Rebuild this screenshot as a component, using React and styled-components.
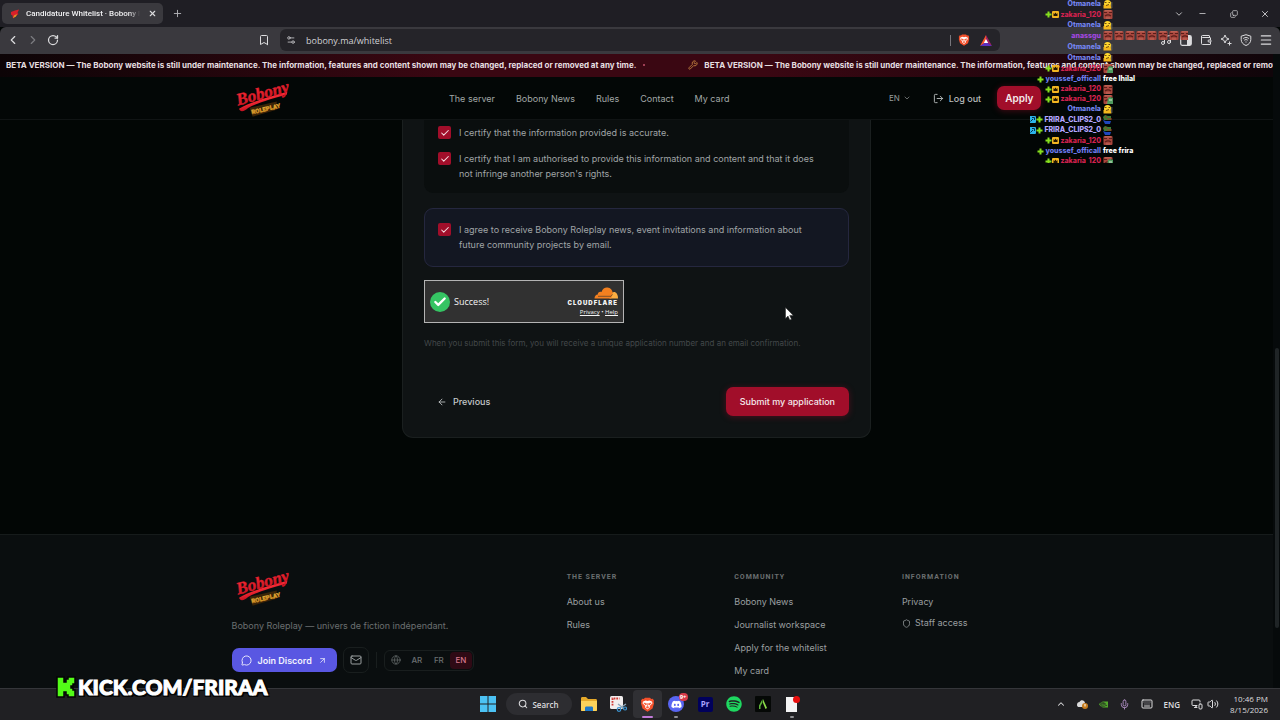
import React from "react"
import styled, {createGlobalStyle} from "styled-components"
import {
  ArrowLeft,
  ArrowUpRight,
  Bookmark,
  Check,
  ChevronDown,
  ChevronLeft,
  ChevronRight,
  ChevronUp,
  Copy,
  Globe,
  Keyboard,
  LogOut,
  Mail,
  Menu,
  MessageCircle,
  Mic,
  Minus,
  MonitorSmartphone,
  Music,
  Plus,
  RotateCw,
  Search,
  Settings2,
  Shield,
  Volume2,
  Wallet,
  Wrench,
  X,
} from "lucide-react"
import {FaDiscord, FaSpotify} from "react-icons/fa"
import {SiNvidia} from "react-icons/si"

const betaText =
  "BETA VERSION — The Bobony website is still under maintenance. The information, features and content shown may be changed, replaced or removed at any time."

const navLinks = ["The server", "Bobony News", "Rules", "Contact", "My card"]

const footerColumns = [
  {title: "The server", links: ["About us", "Rules"]},
  {
    title: "Community",
    links: ["Bobony News", "Journalist workspace", "Apply for the whitelist", "My card"],
  },
  {title: "Information", links: ["Privacy"], staff: true},
]

const chat = [
  {name: "Otmanela", color: "#7484ee", emotes: ["duck"]},
  {name: "zakaria_120", color: "#d3224f", badges: ["plus", "crown"], emotes: ["brick"], tall: true},
  {name: "Otmanela", color: "#7484ee", emotes: ["duck"]},
  {name: "anassgu", color: "#a347e0", emotes: Array(8).fill("brick"), tall: true},
  {name: "Otmanela", color: "#7484ee", emotes: ["duck"], tall: true},
  {name: "Otmanela", color: "#7484ee", emotes: ["duck"], tall: true},
  {name: "zakaria_120", color: "#d3224f", badges: ["plus", "crown"], emotes: ["mix"], tall: true},
  {name: "youssef_officall", color: "#6f7df0", badges: ["plus"], text: "free lhilal"},
  {name: "zakaria_120", color: "#d3224f", badges: ["plus", "crown"], emotes: ["brick"]},
  {name: "zakaria_120", color: "#d3224f", badges: ["plus", "crown"], emotes: ["mix"]},
  {name: "Otmanela", color: "#7484ee", emotes: ["duck"]},
  {name: "FRIRA_CLIPS2_0", color: "#b4a6ff", badges: ["mod", "plus"], emotes: ["frog"], tall: true},
  {name: "FRIRA_CLIPS2_0", color: "#b4a6ff", badges: ["mod", "plus"], emotes: ["frog"]},
  {name: "zakaria_120", color: "#d3224f", badges: ["plus", "crown"], emotes: ["brick"], tall: true},
  {name: "youssef_officall", color: "#6f7df0", badges: ["plus"], text: "free frira"},
  {name: "zakaria_120", color: "#d3224f", badges: ["plus", "crown"], emotes: ["mix"]},
]

const Logo = () => (
  <LogoArt width="58" height="36" viewBox="0 0 58 36" aria-label="Bobony Roleplay">
    <defs>
      <linearGradient id="logoRed" x1="0" y1="0" x2="0" y2="1">
        <stop offset="0" stopColor="#ff3038" />
        <stop offset="1" stopColor="#c01020" />
      </linearGradient>
      <linearGradient id="logoGold" x1="0" y1="0" x2="0" y2="1">
        <stop offset="0" stopColor="#f8c648" />
        <stop offset="1" stopColor="#b87818" />
      </linearGradient>
    </defs>
    <g transform="rotate(-15 30 18)">
      <path d="M5 22.500 C18 18.500 40 19 56 18.500 L55 21 C40 21 24 21.500 14 24 C10 26.500 5 26.500 5 22.500Z" fill="url(#logoRed)" />
      <text x="5" y="19" fontFamily="Liberation Serif, serif" fontStyle="italic" fontWeight="700" fontSize="17" fill="url(#logoRed)" stroke="#d81828" strokeWidth="0.500">Bobony</text>
    </g>
    <g transform="rotate(-13 34 28)">
      <path d="M18 24 L46 24 L44 32 L19 33.500Z" fill="#3a2408" />
      <text x="19" y="31" fontFamily="Roboto, sans-serif" fontWeight="900" fontSize="6" fill="url(#logoGold)" stroke="#e0a02c" strokeWidth="0.300">ROLEPLAY</text>
    </g>
  </LogoArt>
)

const BraveIcon = ({size}) => (
  <svg width={size} height={size} viewBox="0 0 24 24">
    <path d="M8 1h8l2 2 2.500-0.300L22.500 6l-0.700 2 0.700 2-2.500 8.500L12 23.500 4 18.500 1.500 10l0.700-2-0.700-2 2-3.300L6 3z" fill="#f4502b" />
    <path d="M5 7l4-1.500 3 0.800 3-0.800L19 7l1 3-4.500 4.500 0.500 2-4 3.500-4-3.500 0.500-2L4 10z" fill="#fff" />
    <path d="M6 9.500l4.500 1.200-1 2.300zM18 9.500l-4.500 1.200 1 2.300zM12 10v5M9.800 16.200l2.200-1.200 2.200 1.200-2.200 1.500z" fill="#f4502b" stroke="#f4502b" />
  </svg>
)

const Badge = ({kind}) => {
  if (kind === "plus")
    return (
      <svg width="7" height="7" viewBox="0 0 7 7">
        <path d="M2.500 0.500h2v2h2v2h-2v2h-2v-2h-2v-2h2z" fill="#86e01e" />
      </svg>
    )
  if (kind === "crown")
    return (
      <svg width="7" height="7" viewBox="0 0 7 7">
        <rect width="7" height="7" rx="1" fill="#f2b521" />
        <path d="M1.500 2l1 1 1-1.500 1 1.500 1-1v3h-4z" fill="#241703" />
      </svg>
    )
  return (
    <svg width="7" height="7" viewBox="0 0 7 7">
      <rect width="7" height="7" rx="1" fill="#2db4ea" />
      <path d="M1.500 5.500L4 3M3 1.500h2.500V4" stroke="#08324a" fill="none" />
    </svg>
  )
}

const Emote = ({kind}) => {
  if (kind === "duck")
    return (
      <svg width="10" height="9" viewBox="0 0 10 9">
        <circle cx="4.500" cy="3.500" r="3.500" fill="#ffd62c" />
        <path d="M0.500 5h7l1 3.500h-8z" fill="#f4b81c" />
        <path d="M1.500 2.500h2M5.500 2.500h1.500M3 5.500l3-1" stroke="#4b2b08" strokeWidth="0.800" />
        <path d="M8.800 2v6" stroke="#6b685c" />
      </svg>
    )
  if (kind === "frog")
    return (
      <svg width="10" height="9" viewBox="0 0 10 9">
        <path d="M0 2l2-2 3 1 3 0v4H1z" fill="#3d7c34" />
        <path d="M0 5l3 1h5l-1 3H2z" fill="#1e46bd" />
        <path d="M4 4h5M2 2h2" stroke="#a63320" />
      </svg>
    )
  return (
    <svg width="10" height="9" viewBox="0 0 10 9">
      <rect x="0.500" width="9" height="9" rx="1" fill="#a8463d" />
      <path d="M1 2.500h3M6 2.500h3M2 6c2-1.500 4-1.500 6 0" stroke="#5b1d19" strokeWidth="1.200" fill="none" />
      <path d="M2 0.800h6M3 8h4" stroke="#d07c6c" strokeWidth="0.700" />
      {kind === "mix" && <path d="M5 3l2-1 3 1v6H4z" fill="#4f9a5d" />}
      {kind === "mix" && <path d="M6 5h3" stroke="#d7e6d0" />}
    </svg>
  )
}

const Consent = ({id, children}) => (
  <ConsentRow htmlFor={id}>
    <CheckBox>
      <CheckInput type="checkbox" id={id} defaultChecked />
      <Check size={10} strokeWidth={2.5} />
    </CheckBox>
    <span>{children}</span>
  </ConsentRow>
)

const BrowserTop = () => (
  <>
    <TabStrip>
      <Tab>
        <svg width="10" height="10" viewBox="0 0 10 10">
          <path d="M1 3l4-1.500L9 0.500 7.500 4l1 1L3 9.500 2.500 6.500 1 5.500z" fill="#d8202a" />
          <path d="M3 9l1-2.500 3-1.500-1 2.500z" fill="#d69a26" />
        </svg>
        <TabTitle>Candidature Whitelist · Bobony R</TabTitle>
        <IconButton aria-label="Close tab" $size={12}>
          <X size={9} strokeWidth={3} />
        </IconButton>
      </Tab>
      <IconButton aria-label="New tab" $size={18} $color="#b4b4b8">
        <Plus size={11} />
      </IconButton>
      <WindowControls>
        <IconButton aria-label="Search tabs" $size={16}>
          <ChevronDown size={10} />
        </IconButton>
        <IconButton aria-label="Minimise" $size={31}>
          <Minus size={9} />
        </IconButton>
        <IconButton aria-label="Restore" $size={31}>
          <RestoreIcon size={8} />
        </IconButton>
        <IconButton aria-label="Close" $size={31}>
          <X size={10} />
        </IconButton>
      </WindowControls>
    </TabStrip>
    <Toolbar>
      <ToolGroup>
        <IconButton aria-label="Back" $size={20}>
          <ChevronLeft size={14} />
        </IconButton>
        <IconButton aria-label="Forward" $size={20} $color="#7c7c80">
          <ChevronRight size={14} />
        </IconButton>
        <IconButton aria-label="Reload" $size={20}>
          <RotateCw size={12} strokeWidth={2.5} />
        </IconButton>
        <BookmarkButton aria-label="Bookmark" $size={20}>
          <Bookmark size={12} />
        </BookmarkButton>
      </ToolGroup>
      <AddressBar>
        <Settings2 size={10} />
        <AddressInput aria-label="Address" defaultValue="bobony.ma/whitelist" />
        <ShieldsGroup>
          <AddressDivider />
          <BraveIcon size={12} />
        </ShieldsGroup>
        <svg width="12" height="11" viewBox="0 0 12 11">
          <path d="M6 0L0 11l6-3.500z" fill="#f4532d" />
          <path d="M6 0l6 11-6-3.500z" fill="#9e1f63" />
          <path d="M0 11h12L6 7z" fill="#5b2fc0" />
          <path d="M6 4L3.800 8h4.400z" fill="#fff" />
        </svg>
      </AddressBar>
      <ToolGroup $end>
        <IconButton aria-label="Playlist" $size={20}>
          <Music size={12} />
        </IconButton>
        <IconButton aria-label="Sidebar" $size={20}>
          <svg width="12" height="11" viewBox="0 0 12 11">
            <rect x="0.700" y="0.700" width="10.600" height="9.600" rx="1.500" stroke="currentColor" strokeWidth="1.200" fill="none" />
            <rect x="7" y="1" width="4" height="9" fill="currentColor" />
          </svg>
        </IconButton>
        <IconButton aria-label="Wallet" $size={20}>
          <Wallet size={12} />
        </IconButton>
        <IconButton aria-label="Leo" $size={20}>
          <svg width="12" height="12" viewBox="0 0 12 12" fill="none" stroke="currentColor">
            <path d="M5 1l1.200 2.800L9 5 6.200 6.200 5 9 3.800 6.200 1 5l2.800-1.200z" strokeLinejoin="round" />
            <path d="M9.500 7.500v4M7.500 9.500h4" />
          </svg>
        </IconButton>
        <IconButton aria-label="VPN" $size={20}>
          <svg width="12" height="12" viewBox="0 0 12 12" fill="none" stroke="currentColor">
            <path d="M6 0.700l4.800 1.500v3.300c0 3-2 5-4.800 6-2.800-1-4.800-3-4.800-6V2.200z" />
            <path d="M3.200 4.500c1.600-1.300 4-1.300 5.600 0M4.300 6.200c1-0.800 2.400-0.800 3.400 0M5.500 8h1" />
          </svg>
        </IconButton>
        <IconButton aria-label="Menu" $size={20}>
          <Menu size={14} />
        </IconButton>
      </ToolGroup>
    </Toolbar>
  </>
)

const Site = () => (
  <Viewport>
    <Page>
      <BetaBar>
        <BetaItem>{betaText}</BetaItem>
        <BetaDot />
        <Wrench size={10} color="#c98742" />
        <BetaItem>{betaText}</BetaItem>
      </BetaBar>
      <Header>
        <HeaderInner>
          <Logo />
          <Nav>
            {navLinks.map(link => (
              <NavLink href="#" key={link}>
                {link}
              </NavLink>
            ))}
          </Nav>
          <Account>
            <LangButton>
              EN <ChevronDown size={8} />
            </LangButton>
            <LogoutButton>
              <LogOut size={11} /> Log out
            </LogoutButton>
            <PrimaryButton $small>Apply</PrimaryButton>
          </Account>
        </HeaderInner>
      </Header>
      <Main>
        <Card>
          <CertifyBox>
            <Consent id="accurate">I certify that the information provided is accurate.</Consent>
            <Consent id="authorised">
              I certify that I am authorised to provide this information and content and that it does not infringe
              another person's rights.
            </Consent>
          </CertifyBox>
          <NewsBox>
            <Consent id="news">
              I agree to receive Bobony Roleplay news, event invitations and information about future community
              projects by email.
            </Consent>
          </NewsBox>
          <Turnstile>
            <SuccessMark>
              <Check size={14} strokeWidth={4} />
            </SuccessMark>
            <SuccessText>Success!</SuccessText>
            <CloudBrand>
              <svg width="24" height="12" viewBox="0 0 24 12">
                <path d="M15.500 11.500c0.300-3.500 2-6.500 4.500-6.500 2.300 0 4 2.500 4 6.500z" fill="#fbad41" />
                <path d="M0.500 11.500C0.500 9 1.800 7.500 3.800 7.400 3.500 5.500 6 4 7.500 5 8.500 1.500 11 0.300 13.500 0.500c3 0.300 5 2.500 5.200 5.500l-1.500 5.500z" fill="#f38020" />
                <path d="M4 9.300h13l1.500-2" stroke="#313131" strokeWidth="0.600" fill="none" />
              </svg>
              <CloudName>CLOUDFLARE</CloudName>
              <CloudLinks>
                <a href="#">Privacy</a> • <a href="#">Help</a>
              </CloudLinks>
            </CloudBrand>
          </Turnstile>
          <Hint>
            When you submit this form, you will receive a unique application number and an email confirmation.
          </Hint>
          <Actions>
            <GhostButton>
              <ArrowLeft size={10} /> Previous
            </GhostButton>
            <PrimaryButton>Submit my application</PrimaryButton>
          </Actions>
        </Card>
      </Main>
      <Footer>
        <FooterGrid>
          <FooterBrand>
            <Logo />
            <Tagline>Bobony Roleplay — univers de fiction indépendant.</Tagline>
            <FooterTools>
              <DiscordLink href="#">
                <MessageCircle size={11} /> Join Discord <ArrowUpRight size={9} />
              </DiscordLink>
              <MailLink href="#" aria-label="Email">
                <Mail size={12} />
              </MailLink>
              <ToolDivider />
              <LangSwitch>
                <Globe size={10} />
                <LangOption>AR</LangOption>
                <LangOption>FR</LangOption>
                <LangOption $active>EN</LangOption>
              </LangSwitch>
            </FooterTools>
          </FooterBrand>
          {footerColumns.map(column => (
            <FooterColumn key={column.title}>
              <FooterTitle>{column.title}</FooterTitle>
              {column.links.map(link => (
                <FooterLink href="#" key={link}>
                  {link}
                </FooterLink>
              ))}
              {column.staff && (
                <StaffLink href="#">
                  <Shield size={9} /> Staff access
                </StaffLink>
              )}
            </FooterColumn>
          ))}
        </FooterGrid>
      </Footer>
    </Page>
    <ScrollTrack>
      <ScrollThumb />
    </ScrollTrack>
  </Viewport>
)

const Taskbar = () => (
  <Bar>
    <Apps>
      <AppSlot aria-label="Start">
        <svg width="16" height="16" viewBox="0 0 16 16">
          <path d="M0 0h7.500v7.500H0zM8.500 0H16v7.500H8.500zM0 8.500h7.500V16H0zM8.500 8.500H16V16H8.500z" fill="#4cc2f4" />
        </svg>
      </AppSlot>
      <SearchPill>
        <Search size={10} strokeWidth={2.5} /> Search
      </SearchPill>
      <AppSlot aria-label="Files">
        <svg width="16" height="14" viewBox="0 0 16 14">
          <path d="M0 1.500C0 0.500 0.500 0 1.500 0H5l2 2h7.500c1 0 1.500 0.500 1.500 1.500V14H0z" fill="#e5a92a" />
          <path d="M0 4h16v8c0 1.500-0.500 2-2 2H2c-1.500 0-2-0.500-2-2z" fill="#fbd25b" />
          <path d="M4 14v-3c0-1 0.500-1.500 1.500-1.500h5c1 0 1.500 0.500 1.500 1.500v3z" fill="#1e78c8" />
        </svg>
      </AppSlot>
      <AppSlot aria-label="Snipping Tool">
        <svg width="17" height="16" viewBox="0 0 17 16">
          <rect width="13" height="13" rx="1.500" fill="#f1eeee" />
          <path d="M2.500 9.500v-7h7" stroke="#d03a35" strokeWidth="1.800" strokeDasharray="1.800 0.900" fill="none" />
          <path d="M8 8l6 4.500M16 8l-6 4" stroke="#8aa5b8" strokeWidth="1.400" />
          <circle cx="9" cy="13.500" r="1.800" stroke="#3c96d4" fill="none" strokeWidth="1.200" />
          <circle cx="15" cy="12.500" r="1.500" stroke="#3c96d4" fill="none" strokeWidth="1.200" />
        </svg>
      </AppSlot>
      <AppSlot aria-label="Brave" $active>
        <BraveIcon size={15} />
      </AppSlot>
      <AppSlot aria-label="Discord" $open>
        <DiscordTile>
          <FaDiscord size={11} />
        </DiscordTile>
        <Count>9+</Count>
      </AppSlot>
      <AppSlot aria-label="Premiere Pro">
        <PrTile>Pr</PrTile>
      </AppSlot>
      <AppSlot aria-label="Spotify">
        <FaSpotify size={16} color="#1ed760" />
      </AppSlot>
      <AppSlot aria-label="Launcher">
        <svg width="16" height="16" viewBox="0 0 16 16">
          <rect width="16" height="16" rx="1" fill="#050806" />
          <path d="M4 13V9.500L7.500 3v3.500L5.500 10v3z" fill="#5fb53a" />
          <path d="M8 3l4 9-1.500 1L8 7z" fill="#8bdc4a" />
        </svg>
      </AppSlot>
      <AppSlot aria-label="Document" $open>
        <svg width="16" height="16" viewBox="0 0 16 16">
          <path d="M2 1h8l3 3v12H2z" fill="#f4f4f4" />
          <circle cx="12.500" cy="3.500" r="3.500" fill="#e80d0d" />
        </svg>
      </AppSlot>
    </Apps>
    <Tray>
      <ChevronUp size={10} strokeWidth={2.5} />
      <svg width="11" height="10" viewBox="0 0 11 10">
        <path d="M0 6c0-2 1-3 2.500-3C3.500 0.500 7.500 0.500 8 4v4H2C1 8 0 7.500 0 6z" fill="#dcdcdc" />
        <circle cx="8" cy="7" r="3" fill="#c57c1e" />
        <path d="M8 5v2.500" stroke="#fff" />
      </svg>
      <SiNvidia size={9} color="#51a82b" />
      <Mic size={11} color="#b490c8" />
      <Keyboard size={12} />
      <Language>ENG</Language>
      <TrayPair>
        <MonitorSmartphone size={12} />
        <Volume2 size={12} />
      </TrayPair>
      <Clock>
        <span>10:46 PM</span>
        <span>8/15/2026</span>
      </Clock>
    </Tray>
  </Bar>
)

const App = () => (
  <>
    <GlobalStyle />
    <Desktop>
      <BrowserTop />
      <Site />
      <Taskbar />
      <ChatOverlay>
        {chat.map((line, index) => (
          <ChatLine key={index} $tall={line.tall}>
            <ChatName $color={line.color}>
              {(line.badges || []).map(badge => (
                <Badge kind={badge} key={badge} />
              ))}
              <ChatUser>{line.name}</ChatUser>
            </ChatName>
            <ChatMessage>
              {line.text}
              {(line.emotes || []).map((emote, i) => (
                <Emote kind={emote} key={i} />
              ))}
            </ChatMessage>
          </ChatLine>
        ))}
      </ChatOverlay>
      <KickBanner>
        <svg width="20" height="22" viewBox="0 0 20 22">
          <path d="M1 1h7v5h2V3h2V1h7v7h-2v2h-2v2h2v2h2v7h-7v-2h-2v-3H8v5H1z" fill="#53fc18" stroke="#050505" strokeWidth="1.500" />
        </svg>
        KICK.COM/FRIRAA
      </KickBanner>
      <Cursor width="9" height="14" viewBox="0 0 9 14">
        <path d="M0.500 0.500v11l2.500-2.500 1.800 4 1.700-0.800-1.800-3.800h3.600z" fill="#fff" stroke="#222" strokeWidth="0.500" />
      </Cursor>
    </Desktop>
  </>
)

export default App

const GlobalStyle = createGlobalStyle`
  * {
    box-sizing: border-box;
  }
  body {
    margin: 0;
    background: #020605;
    font-family: Inter, sans-serif;
    font-size: 9px;
  }
  button, input {
    font: inherit;
    color: inherit;
    border: 0;
    margin: 0;
    padding: 0;
    background: none;
  }
  a {
    color: inherit;
    text-decoration: none;
  }
  svg {
    display: block;
    flex-shrink: 0;
  }
`
const Desktop = styled.div`
  position: relative;
  display: grid;
  grid-template-columns: minmax(0, 1fr);
  grid-template-rows: 27px 27px minmax(0, 1fr) 32px;
  height: 100vh;
  overflow: hidden;
`
const LogoArt = styled.svg`
  overflow: visible;
`
const TabStrip = styled.div`
  display: flex;
  align-items: center;
  gap: 5px;
  padding-left: 2px;
  background: #1f1e24;
  color: #dcdcde;
`
const Tab = styled.div`
  display: flex;
  align-items: center;
  gap: 6px;
  width: 161px;
  height: 21px;
  padding: 0 5px 0 8px;
  border-radius: 5px;
  background: #3a393e;
`
const TabTitle = styled.span`
  flex: 1;
  overflow: hidden;
  white-space: nowrap;
  font-family: Roboto, sans-serif;
  font-size: 8px;
  font-weight: 500;
  color: #f0f0f2;
  mask-image: linear-gradient(90deg, #000 90%, transparent);
`
const IconButton = styled.button`
  display: flex;
  align-items: center;
  justify-content: center;
  width: ${({$size}) => $size}px;
  height: 20px;
  color: ${({$color}) => $color || "#dcdcde"};
`
const WindowControls = styled.div`
  display: flex;
  margin-left: auto;
`
const RestoreIcon = styled(Copy)`
  transform: scaleY(-1);
`
const Toolbar = styled.div`
  display: grid;
  grid-template-columns: 1fr minmax(0, 720px) 1fr;
  align-items: center;
  padding-bottom: 1px;
  border-radius: 6px 6px 0 0;
  background: #3a393e;
`
const ToolGroup = styled.div`
  display: flex;
  justify-content: ${({$end}) => ($end ? "flex-end" : "flex-start")};
  padding: ${({$end}) => ($end ? "0 4px" : "0 6px 0 3px")};
`
const BookmarkButton = styled(IconButton)`
  margin-left: auto;
`
const AddressBar = styled.div`
  display: flex;
  align-items: center;
  gap: 10px;
  height: 22px;
  padding: 0 8px 0 6px;
  border-radius: 6px;
  background: #252429;
  color: #c6c6ca;
`
const AddressInput = styled.input`
  flex: 1;
  min-width: 0;
  font-family: "Open Sans", sans-serif;
  color: #d0d0d4;
`
const ShieldsGroup = styled.div`
  display: flex;
  align-items: center;
  gap: 7px;
`
const AddressDivider = styled.span`
  width: 1px;
  height: 11px;
  background: #77767c;
`
const Viewport = styled.div`
  display: flex;
  min-height: 0;
  overflow: hidden;
  background: #020605;
`
const Page = styled.div`
  flex: 1;
  min-width: 0;
`
const BetaBar = styled.div`
  display: flex;
  align-items: center;
  height: 23px;
  padding: 0 0 2px 6px;
  overflow: hidden;
  white-space: nowrap;
  background: linear-gradient(90deg, #0c0406 0%, #3a0712 35%, #3a0712 60%, #10050a 100%);
`
const BetaItem = styled.strong`
  font-size: 8px;
  font-weight: 700;
  color: #e6dfe0;
  svg + & {
    margin-left: 6px;
  }
`
const BetaDot = styled.span`
  flex-shrink: 0;
  width: 2px;
  height: 2px;
  margin: 0 43px 0 7px;
  border-radius: 50%;
  background: #c0526a;
`
const Header = styled.header`
  height: 43px;
  border-bottom: 1px solid #101414;
  background: #030706;
`
const HeaderInner = styled.div`
  display: flex;
  align-items: center;
  justify-content: space-between;
  max-width: 810px;
  height: 100%;
  margin: 0 auto;
`
const Nav = styled.nav`
  display: flex;
  gap: 21px;
`
const NavLink = styled.a`
  color: #a2a7a7;
`
const Account = styled.div`
  display: flex;
  align-items: center;
`
const LangButton = styled.button`
  display: flex;
  align-items: center;
  gap: 3px;
  margin-right: 22px;
  font-size: 8px;
  color: #979c9c;
`
const LogoutButton = styled.button`
  display: flex;
  align-items: center;
  gap: 5px;
  margin-right: 16px;
  font-weight: 500;
  color: #b9bdbd;
`
const PrimaryButton = styled.button`
  height: ${({$small}) => ($small ? 24 : 29)}px;
  padding: 0 ${({$small}) => ($small ? 8 : 14)}px;
  border-radius: 7px;
  background: #a10e2a;
  color: #f4e9eb;
  font-size: ${({$small}) => ($small ? 10 : 9)}px;
  font-weight: ${({$small}) => ($small ? 600 : 500)};
  box-shadow: 0 1px 6px rgba(161, 14, 42, 0.4);
`
const Main = styled.main`
  padding: 0 20px 96px;
`
const Card = styled.form`
  max-width: 469px;
  margin: 0 auto;
  padding: 0 21px 21px;
  border: 1px solid #1a1f1f;
  border-top: 0;
  border-radius: 0 0 11px 11px;
  background: #0f1314;
`
const CertifyBox = styled.div`
  display: grid;
  gap: 11px;
  padding: 5px 26px 12px 14px;
  border-radius: 0 0 9px 9px;
  background: #0a0e0e;
`
const NewsBox = styled.div`
  margin-top: 15px;
  padding: 13px 25px 14px 13px;
  border: 1px solid #25273f;
  border-radius: 9px;
  background: #131722;
`
const ConsentRow = styled.label`
  display: flex;
  gap: 8px;
  line-height: 15px;
  color: #a0a5a7;
`
const CheckBox = styled.span`
  display: grid;
  flex-shrink: 0;
  width: 13px;
  height: 13px;
  margin-top: 1px;
  place-items: center;
  color: #f6dfe3;
  & > * {
    grid-area: 1 / 1;
  }
  svg {
    z-index: 1;
    pointer-events: none;
  }
`
const CheckInput = styled.input`
  appearance: none;
  width: 13px;
  height: 13px;
  border-radius: 2px;
  background: #a10e2a;
`
const Turnstile = styled.div`
  display: flex;
  align-items: center;
  width: 200px;
  height: 43px;
  margin-top: 13px;
  padding: 0 5px;
  border: 1px solid #b4b4b4;
  background: #313131;
  color: #f4f4f4;
`
const SuccessMark = styled.span`
  display: grid;
  width: 20px;
  height: 20px;
  place-items: center;
  border-radius: 50%;
  background: #35c463;
  color: #fff;
`
const SuccessText = styled.span`
  margin-left: 4px;
  font-family: "Open Sans", sans-serif;
`
const CloudBrand = styled.div`
  display: flex;
  flex-direction: column;
  align-items: flex-end;
  margin-left: auto;
`
const CloudName = styled.strong`
  font-size: 6px;
  font-weight: 900;
  line-height: 8px;
  letter-spacing: 1px;
`
const CloudLinks = styled.span`
  margin-top: 1px;
  font-family: "Open Sans", sans-serif;
  font-size: 6px;
  line-height: 8px;
  a {
    text-decoration: underline;
  }
`
const Hint = styled.p`
  margin: 13px 0 36px;
  font-size: 8px;
  line-height: 15px;
  color: #43484a;
`
const Actions = styled.div`
  display: flex;
  align-items: center;
  justify-content: space-between;
`
const GhostButton = styled.button`
  display: flex;
  align-items: center;
  gap: 6px;
  padding: 0 13px;
  font-weight: 500;
  color: #c4c8c9;
`
const Footer = styled.footer`
  padding: 34px 20px;
  border-top: 1px solid #161b1b;
  background: #0a0e0f;
`
const FooterGrid = styled.div`
  display: grid;
  grid-template-columns: 2.2fr 1fr 1fr 1fr;
  gap: 28px;
  max-width: 810px;
  margin: 0 auto;
`
const FooterBrand = styled.div`
  display: flex;
  flex-direction: column;
`
const Tagline = styled.p`
  margin: 13px 0 13px;
  line-height: 16px;
  color: #6a6f70;
`
const FooterTools = styled.div`
  display: flex;
  align-items: center;
  gap: 6px;
`
const DiscordLink = styled.a`
  display: flex;
  align-items: center;
  gap: 6px;
  height: 24px;
  padding: 0 10px 0 9px;
  border-radius: 7px;
  background: #5957e2;
  font-weight: 600;
  color: #f1f1fd;
`
const MailLink = styled.a`
  display: grid;
  place-items: center;
  width: 26px;
  height: 26px;
  border: 1px solid #191e1e;
  border-radius: 7px;
  color: #9a9fa0;
`
const ToolDivider = styled.span`
  width: 1px;
  height: 16px;
  margin: 0 1px;
  background: #191e1e;
`
const LangSwitch = styled.div`
  display: flex;
  align-items: center;
  height: 21px;
  padding: 0 1px 0 6px;
  border: 1px solid #191e1e;
  border-radius: 6px;
  color: #5c6162;
`
const LangOption = styled.button`
  width: 22px;
  height: 17px;
  border-radius: 4px;
  font-size: 8px;
  font-weight: 500;
  color: ${({$active}) => ($active ? "#d8778c" : "#6a6f70")};
  background: ${({$active}) => ($active ? "#2f0a15" : "transparent")};
  svg + & {
    margin-left: 5px;
  }
`
const FooterColumn = styled.div`
  display: flex;
  flex-direction: column;
  align-items: flex-start;
  gap: 8px;
  padding-top: 2px;
`
const FooterTitle = styled.h4`
  margin: 0 0 3px;
  font-family: Roboto, sans-serif;
  font-size: 7px;
  line-height: 12px;
  font-weight: 700;
  letter-spacing: 1px;
  text-transform: uppercase;
  color: #6a6f70;
`
const FooterLink = styled.a`
  line-height: 15px;
  color: #9a9fa0;
`
const StaffLink = styled(FooterLink)`
  display: flex;
  align-items: center;
  gap: 4px;
  line-height: 12px;
`
const ScrollTrack = styled.div`
  display: flex;
  width: 7px;
  padding: 294px 1px 60px 2px;
  background: #060a0b;
`
const ScrollThumb = styled.div`
  flex: 1;
  border-radius: 2px;
  background: #1f2426;
`
const Bar = styled.div`
  display: grid;
  grid-template-columns: 1fr auto 1fr;
  align-items: center;
  padding-bottom: 1px;
  border-top: 1px solid #35363a;
  background: #202023;
  color: #dcdcde;
  font-family: "Open Sans", sans-serif;
`
const Apps = styled.div`
  display: flex;
  grid-column: 2;
  align-items: center;
`
const AppSlot = styled.button`
  position: relative;
  display: grid;
  place-items: center;
  width: 29px;
  height: 28px;
  border-radius: 4px;
  background: ${({$active}) => ($active ? "#303034" : "transparent")};
  &::after {
    content: "";
    position: absolute;
    bottom: 0;
    width: ${({$active}) => ($active ? 11 : 4)}px;
    height: 2px;
    border-radius: 1px;
    background: ${({$active, $open}) => ($active ? "#c07ad8" : $open ? "#8f8f92" : "transparent")};
  }
`
const SearchPill = styled.button`
  display: flex;
  align-items: center;
  justify-content: center;
  gap: 4px;
  width: 66px;
  height: 22px;
  margin: 0 3px;
  border-radius: 11px;
  background: #2d2d31;
  font-size: 8px;
  font-weight: 600;
`
const DiscordTile = styled.span`
  display: grid;
  place-items: center;
  width: 16px;
  height: 16px;
  border-radius: 50%;
  background: #5865f2;
  color: #fff;
`
const Count = styled.span`
  position: absolute;
  top: 3px;
  right: 3px;
  padding: 0 1px;
  border-radius: 5px;
  background: #d83a4a;
  color: #fff;
  font-size: 6px;
  font-weight: 700;
  line-height: 8px;
`
const PrTile = styled.span`
  width: 15px;
  height: 15px;
  border-radius: 2px;
  background: #00005b;
  color: #a9a2ff;
  font-size: 8px;
  font-weight: 700;
  line-height: 14px;
`
const Tray = styled.div`
  display: flex;
  align-items: center;
  justify-content: flex-end;
  gap: 11px;
  padding-right: 12px;
  font-size: 8px;
`
const Language = styled.span`
  font-weight: 600;
`
const TrayPair = styled.div`
  display: flex;
  gap: 4px;
`
const Clock = styled.div`
  display: flex;
  flex-direction: column;
  align-items: flex-end;
  line-height: 11px;
`
const ChatOverlay = styled.div`
  position: absolute;
  top: -1px;
  right: 92px;
  width: 158px;
  height: 164px;
  overflow: hidden;
  pointer-events: none;
`
const ChatLine = styled.div`
  display: grid;
  grid-template-columns: 71px 1fr;
  gap: 2px;
  align-items: center;
  height: ${({$tall}) => ($tall ? 11 : 10)}px;
  font-size: 7px;
  font-weight: 800;
  line-height: 10px;
  white-space: nowrap;
`
const ChatName = styled.span`
  display: flex;
  align-items: center;
  justify-content: flex-end;
  color: ${({$color}) => $color};
`
const ChatUser = styled.span`
  margin-left: 1px;
`
const ChatMessage = styled.span`
  display: flex;
  gap: 1px;
  color: #fff;
`
const KickBanner = styled.div`
  position: absolute;
  left: 56px;
  bottom: 21px;
  display: flex;
  align-items: center;
  gap: 2px;
  font-family: Lato, sans-serif;
  font-size: 21px;
  font-weight: 900;
  line-height: 24px;
  color: #fff;
  -webkit-text-stroke: 1px #fff;
  text-shadow: 2px 2px 0 #050505, -1px -1px 0 #050505, 2px -1px 0 #050505, -1px 2px 0 #050505;
`
const Cursor = styled.svg`
  position: absolute;
  left: 785px;
  top: 307px;
`
